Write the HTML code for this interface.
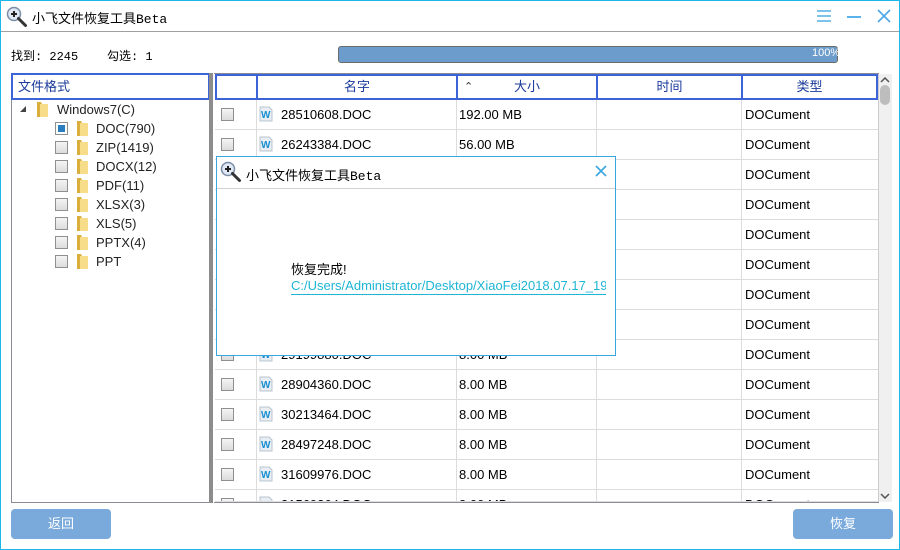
<!DOCTYPE html>
<html><head><meta charset="utf-8"><style>
*{margin:0;padding:0;box-sizing:border-box}
body{width:900px;height:550px;overflow:hidden;background:#fff;font-family:"Liberation Sans","Noto Sans CJK SC",sans-serif;font-size:12px;color:#000;position:relative}
.win{position:absolute;left:0;top:0;width:900px;height:550px;border:1px solid #1ab7ea}
.abs{position:absolute}
.mag{position:absolute}
.cb{position:absolute;width:13px;height:13px;border:1px solid #8f8f8f;background:linear-gradient(#f4f4f4,#dcdcdc)}
.fold{position:absolute;width:14px;height:17px}
.th{position:absolute;top:74px;height:26px;border:2px solid #3c63d8;border-right:none;text-align:center;line-height:22px;font-size:13px;color:#1a3a9a;background:#fff}
.row{position:absolute;left:215px;width:663px;height:30px;border-bottom:1px solid #dcdcdc;font-size:13px;line-height:29px}
.row span{position:absolute;top:0}
.vl{position:absolute;top:100px;height:402px;width:1px;background:#dcdcdc}
.wicon{position:absolute;top:6px;left:44px;width:14px;height:16px}
</style></head><body>
<div class="win"></div>
<svg class="mag" style="left:6px;top:6px" width="22" height="22" viewBox="0 0 22 22"><circle cx="8" cy="8" r="6.5" fill="#dfe8f3" stroke="#7a8ea8" stroke-width="1.5"/><path d="M5 8h6M8 5v6" stroke="#222" stroke-width="2"/><path d="M12.5 12.5l7 7" stroke="#333" stroke-width="3" stroke-linecap="round"/></svg>
<div class="abs" style="left:32px;top:8px;font-size:13px;font-family:'Liberation Mono','Noto Sans CJK SC',monospace">小飞文件恢复工具Beta</div>
<div class="abs" style="left:817px;top:10px;width:14px;height:2px;background:#7cc3ee;box-shadow:0 5px 0 #7cc3ee,0 10px 0 #7cc3ee"></div>
<div class="abs" style="left:847px;top:16px;width:14px;height:2px;background:#5ab2ea"></div>
<svg class="abs" style="left:877px;top:9px" width="14" height="14"><path d="M1 1L13 13M13 1L1 13" stroke="#4aa8e8" stroke-width="1.6"/></svg>
<div class="abs" style="left:1px;top:31px;width:898px;height:1px;background:#a0a0a0"></div>
<div class="abs" style="left:11px;top:47px;font-size:12px;font-family:'Liberation Mono','Noto Sans CJK SC',monospace">找到: 2245&nbsp;&nbsp;&nbsp;&nbsp;勾选: 1</div>
<div class="abs" style="left:338px;top:46px;width:500px;height:17px;border:1px solid #6a6a6a;border-radius:3px;background:#6c9ccb"></div>
<div class="abs" style="left:812px;top:47px;color:#fff;font-size:11px">100%</div>
<div class="abs" style="left:11px;top:73px;width:200px;height:430px;border:1px solid #8a8d94;border-right:none"></div>
<div class="abs" style="left:11px;top:73px;width:199px;height:27px;border:2px solid #3c63d8;color:#1a3a9a;font-size:13px;line-height:23px;padding-left:5px">文件格式</div>
<div class="abs" style="left:209px;top:73px;width:4px;height:430px;background:#8c8c8c"></div>
<div class="abs" style="left:20px;top:106px;width:0;height:0;border-left:6px solid transparent;border-bottom:6px solid #444"></div>
<svg class="fold" style="left:35px;top:101px" viewBox="0 0 14 17"><path d="M2 1h4l1 2h5v13H2z" fill="#d9ae3c"/><path d="M5 3h8v13H5z" fill="#f7dc8a"/></svg>
<div class="abs" style="left:57px;top:102px;font-size:13px;color:#222">Windows7(C)</div>
<div id="tree2"></div>
<div class="abs" style="left:214px;top:73px;width:665px;height:430px;border:1px solid #8a8d94;border-left:none"></div>
<div class="th" style="left:215px;width:41px"></div>
<div class="th" style="left:256px;width:200px">名字</div>
<div class="th" style="left:456px;width:140px">大小<span style="position:absolute;left:6px;top:0px;font-size:11px;color:#333">&#8963;</span></div>
<div class="th" style="left:596px;width:145px">时间</div>
<div class="th" style="left:741px;width:137px;border-right:2px solid #3c63d8">类型</div>
<div class="vl" style="left:256px"></div><div class="vl" style="left:456px"></div><div class="vl" style="left:596px"></div><div class="vl" style="left:741px"></div>
<div id="rows"></div>
<div class="abs" style="left:878px;top:74px;width:14px;height:428px;background:#f0f0f0;border-left:1px solid #ccc"></div>
<div class="abs" style="left:880px;top:85px;width:10px;height:20px;border-radius:5px;background:#bdbdbd"></div>
<svg class="abs" style="left:880px;top:77px" width="10" height="6"><path d="M1 5L5 1L9 5" stroke="#555" stroke-width="1.5" fill="none"/></svg>
<svg class="abs" style="left:880px;top:493px" width="10" height="6"><path d="M1 1L5 5L9 1" stroke="#555" stroke-width="1.5" fill="none"/></svg>
<div class="abs" style="left:11px;top:509px;width:100px;height:30px;border-radius:4px;background:#7aaadb;color:#fff;text-align:center;line-height:30px;font-size:13px">返回</div>
<div class="abs" style="left:793px;top:509px;width:100px;height:30px;border-radius:4px;background:#7aaadb;color:#fff;text-align:center;line-height:30px;font-size:13px">恢复</div>
<div class="abs" style="left:216px;top:156px;width:400px;height:200px;background:#fff;border:1px solid #3aa6e0"></div>
<div class="abs" style="left:217px;top:188px;width:398px;height:1px;background:#d0d0d0"></div>
<svg class="mag" style="left:220px;top:161px" width="22" height="22" viewBox="0 0 22 22"><circle cx="8" cy="8" r="6.5" fill="#dfe8f3" stroke="#7a8ea8" stroke-width="1.5"/><path d="M5 8h6M8 5v6" stroke="#222" stroke-width="2"/><path d="M12.5 12.5l7 7" stroke="#333" stroke-width="3" stroke-linecap="round"/></svg>
<div class="abs" style="left:246px;top:165px;font-size:13px;font-family:'Liberation Mono','Noto Sans CJK SC',monospace">小飞文件恢复工具Beta</div>
<svg class="abs" style="left:595px;top:165px" width="12" height="12"><path d="M1 1L11 11M11 1L1 11" stroke="#3aa6e0" stroke-width="1.6"/></svg>
<div class="abs" style="left:291px;top:259px;font-size:13px">恢复完成!</div>
<div class="abs" style="left:291px;top:278px;font-size:13px;color:#1fb5d6;border-bottom:1px solid #1fb5d6;width:315px;white-space:nowrap;overflow:hidden;line-height:16px">C:/Users/Administrator/Desktop/XiaoFei2018.07.17_19</div>
<script>
var items=["DOC(790)","ZIP(1419)","DOCX(12)","PDF(11)","XLSX(3)","XLS(5)","PPTX(4)","PPT"],h="";
items.forEach(function(t,i){var y=120+19*i;
h+='<div class="cb" style="left:55px;top:'+(y+2)+'px;'+(i==0?'background:#fff;':'')+'">'+(i==0?'<div style="position:absolute;left:2px;top:2px;width:7px;height:7px;background:#2a7ec0"></div>':'')+'</div>';
h+='<svg class="fold" style="left:75px;top:'+(y)+'px" viewBox="0 0 14 17"><path d="M2 1h4l1 2h5v13H2z" fill="#d9ae3c"/><path d="M5 3h8v13H5z" fill="#f7dc8a"/></svg>';
h+='<div class="abs" style="left:96px;top:'+(y+1)+'px;font-size:13px;color:#222">'+t+'</div>';});
document.getElementById('tree2').innerHTML=h;
var rows=[["28510608","192.00 MB"],["26243384","56.00 MB"],["",""],["",""],["",""],["",""],["",""],["",""],["29199880","8.00 MB"],["28904360","8.00 MB"],["30213464","8.00 MB"],["28497248","8.00 MB"],["31609976","8.00 MB"],["31569264","8.00 MB"]];
h="";rows.forEach(function(r,i){var y=100+30*i;var hh=Math.min(30,502-y);
h+='<div class="row" style="top:'+y+'px;height:'+hh+'px;overflow:hidden"><div class="cb" style="left:6px;top:8px"></div>'+
'<svg class="wicon" viewBox="0 0 14 16"><path d="M1 1h9l3 3v11H1z" fill="#e8eef4" stroke="#b8c4d0"/><text x="2" y="12" font-size="10" font-weight="bold" fill="#1a8fd0" font-family="Liberation Sans">W</text></svg>'+
'<span style="left:66px">'+(r[0]?r[0]+'.DOC':'')+'</span><span style="left:244px">'+r[1]+'</span><span style="left:530px">DOCument</span></div>';});
document.getElementById('rows').innerHTML=h;
</script>
</body></html>
